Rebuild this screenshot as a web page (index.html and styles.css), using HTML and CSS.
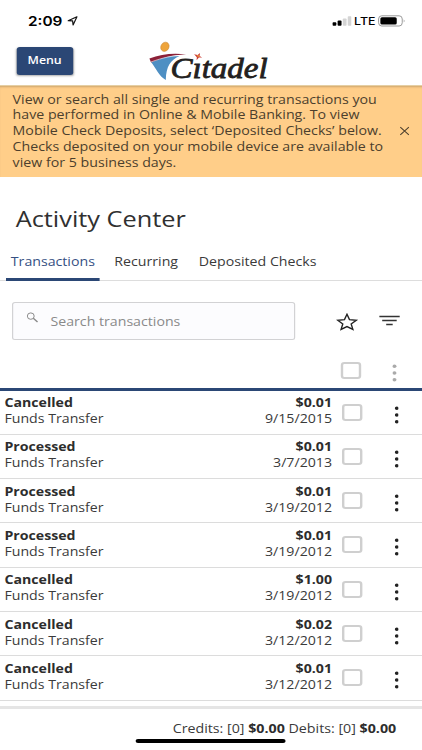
FILE: index.html
```html
<!DOCTYPE html>
<html lang="en">
<head>
<meta charset="utf-8">
<title>Activity Center</title>
<link rel="stylesheet" href="styles.css">
</head>
<body>
<div class="screen">
  <header class="top">
    <div class="status">
      <div class="clock">2:09</div>
      <svg class="loc" viewBox="0 0 12 11" preserveAspectRatio="none"><path d="M1 5.2 10.6 .9 6.4 9.9 5.9 5.3z" fill="none" stroke="#111" stroke-width="1.3" stroke-linejoin="round"/></svg>
      <svg class="signal" viewBox="0 0 20 10" preserveAspectRatio="none"><rect x="0" y="6.3" width="4" height="3.5" rx="1"/><rect x="5.3" y="4.6" width="4" height="5.2" rx="1"/><rect x="10.6" y="2.5" width="3.8" height="7.3" rx=".8" fill="#d4d4d4"/><rect x="15.6" y="0.3" width="3.8" height="9.5" rx=".8" fill="#d4d4d4"/></svg>
      <div class="lte">LTE</div>
      <svg class="battery" viewBox="0 0 28 12" preserveAspectRatio="none"><rect x=".6" y=".8" width="24" height="10.2" rx="3.2" fill="none" stroke="#999"/><rect x="2.4" y="2.2" width="16.6" height="7.4" rx="1.6"/><path d="M26.2 4.2q1.4 1.7 0 3.4z" fill="#777"/></svg>
    </div>
    <div class="brandbar">
      <button class="menu">Menu</button>
      <svg class="logo" viewBox="148 38 124 46" preserveAspectRatio="none">
        <path d="M151 61.500C158 58.500 168 55.500 180 56C171 60 166.500 66 166.200 80C159 76 157 69 151 61.500Z" fill="#4e8fc3"/>
        <path d="M149.800 58.600C161 54 174 52.600 186.500 54.400C172 54.600 161 58.300 151.500 62.600Z" fill="#8c2038"/>
        <path d="M151.300 62C163 57.700 173 55.500 183 55.600" fill="none" stroke="#fff" stroke-width=".6"/>
        <ellipse cx="165.300" cy="46.800" rx="4" ry="4.800" transform="rotate(28 165.300 46.800)" fill="#eea43b" stroke="#c98532" stroke-width=".5"/>
        <text x="171" y="78" textLength="97" lengthAdjust="spacingAndGlyphs" class="wordmark">C&#305;tadel</text>
        <path d="M194.500 54.300 198 55 200.500 52.900 200 56 202.600 57.400 199.300 57.600 197 60.200 197.200 57.300Z" fill="#cc4038"/>
        <path d="M197.500 55.500 200 56.500" stroke="#eea43b" stroke-width="1.300"/>
      </svg>
    </div>
  </header>
  <section class="notice">
    <p>View or search all single and recurring transactions you<br>have performed in Online &amp; Mobile Banking. To view<br>Mobile Check Deposits, select ‘Deposited Checks’ below.<br>Checks deposited on your mobile device are available to<br>view for 5 business days.</p>
    <svg class="close" viewBox="0 0 10 10" preserveAspectRatio="none"><path d="M.7 1.200 9.300 8.800M9.300 1.200.7 8.800" stroke="#4c3f2d" stroke-width="1.100"/></svg>
  </section>
  <h1>Activity Center</h1>
  <nav class="tabs">
    <a class="tab active">Transactions</a><a class="tab recurring">Recurring</a><a class="tab">Deposited Checks</a>
  </nav>
  <div class="tools">
    <div class="search">
      <svg class="lens" viewBox="0 0 13 11" preserveAspectRatio="none"><ellipse cx="4.600" cy="4.100" rx="3.600" ry="3.200" fill="none" stroke="#888"/><path d="M7.300 6.200 11.700 10" stroke="#888" stroke-width="1.500"/></svg>
      <span>Search transactions</span>
    </div>
    <svg class="star" viewBox="0 0 22 18" preserveAspectRatio="none"><path d="M11 1.300 13.500 6.600 20.300 7.200 15.200 10.900 16.900 16.400 11 13.600 5.100 16.400 6.800 10.900 1.700 7.200 8.500 6.600Z" fill="none" stroke="#222" stroke-width="1.400"/></svg>
    <svg class="filter" viewBox="0 0 21 12" preserveAspectRatio="none"><path d="M0 1.500H20.500M3 5.500H17.500M7 9.500H13.500" stroke="#333" stroke-width="1.600"/></svg>
  </div>
  <div class="listhead">
    <span class="check"></span>
    <svg class="dots" viewBox="0 0 4 18" preserveAspectRatio="none"><ellipse cx="2" cy="2.200" rx="2" ry="1.700"/><ellipse cx="2" cy="9" rx="2" ry="1.700"/><ellipse cx="2" cy="15.800" rx="2" ry="1.700"/></svg>
  </div>
  <main id="rows"></main>
  <footer>
    <div class="totals">Credits: [0] <b>$0.00</b> Debits: [0] <b>$0.00</b></div>
    <div class="home"></div>
  </footer>
</div>
<script src="app.js"></script>
</body>
</html>
```
FILE: styles.css
```css
* { box-sizing: border-box; }
body { margin: 0; background: #fff; overflow: hidden; }
.screen {
  width: 351.667px; height: 750px; overflow: hidden;
  transform: scaleX(1.2); transform-origin: 0 0;
  display: flex; flex-direction: column;
  font: 11.8px/16px "Open Sans", sans-serif; color: #3a3a3a; background: #fff;
}
.screen > * { flex: none; }
svg { display: block; flex: none; }
.top { height: 86px; border-bottom: 1px solid #e5cfa4; }
.status { height: 42px; display: flex; align-items: flex-start; padding: 15px 0 0 23.3px; font-family: Inter, sans-serif; color: #000; }
.clock { width: 29.500px; font-size: 12.800px; line-height: 13px; font-weight: 600; white-space: nowrap; }
.loc { width: 9.200px; height: 10px; margin: 1px 0 0 3px; }
.signal { width: 16.400px; height: 10px; margin: 1px 1.700px 0 212px; }
.lte { width: 17.800px; font-size: 10.300px; line-height: 13px; font-weight: 500; margin-right: 1.800px; }
.battery { width: 23px; height: 12px; }
.brandbar { display: flex; align-items: flex-start; }
.menu { width: 47px; height: 28px; margin: 5px 0 0 13.700px; padding: 0 0 2px; border: 0; border-radius: 2.500px; background: #2b4775; color: #fff; font: 600 10.300px/26px "Open Sans", sans-serif; box-shadow: 0 1px 2px #0005; }
.logo { width: 103.333px; height: 46px; margin: -4px 0 0 62.600px; }
.wordmark { font: italic 29px "Liberation Serif", serif; fill: #231f20; stroke: #231f20; stroke-width: .8px; }
.notice { height: 91px; background: #ffce89; padding: 5.500px 10px 0 10.500px; display: flex; align-items: flex-start; color: #4c3f2d; box-shadow: inset 0 2px 2px -1px #0003; }
.notice p { margin: 0; width: 322.500px; font-size: 11.840px; line-height: 15.900px; white-space: nowrap; }
.close { width: 8.300px; height: 10px; margin: 34.500px 0 0; }
h1 { margin: 27px 0 0 13.100px; height: 29px; font-size: 21.100px; line-height: 29px; font-weight: 400; color: #303030; }
.tabs { height: 48px; display: flex; border-bottom: 1.500px solid #ddd; padding-left: 4.500px; }
.tab { height: 47.500px; padding: 20px 4px 0; }
.tab.active { width: 78px; color: #355083; border-bottom: 3px solid #2b4775; padding-left: 4.500px; }
.recurring { width: 70.700px; padding-left: 12.800px; }
.tab:last-child { padding-left: 12.500px; white-space: nowrap; }
.tools { height: 65px; padding: 21px 0 0 10.300px; display: flex; align-items: flex-start; }
.search { width: 236px; height: 38px; border: 1px solid #d2d2d4; border-radius: 2.500px; background: #fcfcfe; display: flex; color: #8a8a8a; }
.lens { width: 10.300px; height: 11px; margin: 9px 9.800px 0 10.700px; }
.search span { padding-top: 10px; }
.star { width: 18.300px; height: 18px; margin: 11px 0 0 34.200px; }
.filter { width: 17.500px; height: 12px; margin: 12.500px 0 0 17.500px; }
.listhead { height: 44.500px; border-bottom: 3px solid #2b4775; display: flex; align-items: flex-start; padding: 15.500px 0 0 284.300px; }
.check { width: 17px; height: 17px; border: 2px solid #cfcfcf; border-radius: 3px; flex: none; }
.dots { width: 3.400px; height: 18px; margin: 2px 0 0 26.200px; fill: #aaa; }
.row { height: 44.330px; border-bottom: 1.330px solid #dcdcdc; display: flex; align-items: flex-start; padding: 3.500px 0 0 3.700px; }
.kind { width: 140px; }
.amount { width: 133px; text-align: right; }
.row b, .row span { display: block; }
.row .check { margin: 9.500px 0 0 8.800px; }
.row .dots { fill: #222; margin: 11.500px 0 0 26.100px; }
b { color: #2d2d2d; }
footer { margin-top: 5px; border-top: 3px solid #e5e5e5; height: 44px; }
.totals { margin: 11.500px 21.500px 0 0; height: 17px; font-size: 11.860px; text-align: right; white-space: nowrap; }
.home { width: 125px; height: 4px; border-radius: 2px; background: #000; margin: 2px 0 0 113.300px; }
```
FILE: app.js
```js
const items = [
  ["Cancelled", "$0.01", "9/15/2015"],
  ["Processed", "$0.01", "3/7/2013"],
  ["Processed", "$0.01", "3/19/2012"],
  ["Processed", "$0.01", "3/19/2012"],
  ["Cancelled", "$1.00", "3/19/2012"],
  ["Cancelled", "$0.02", "3/12/2012"],
  ["Cancelled", "$0.01", "3/12/2012"]
];
const dots = document.querySelector(".dots").outerHTML;
document.getElementById("rows").innerHTML = items.map(([state, amount, date]) =>
  `<div class="row"><div class="kind"><b>${state}</b><span>Funds Transfer</span></div>
  <div class="amount"><b>${amount}</b><span>${date}</span></div><i class="check"></i>${dots}</div>`).join("");
```
